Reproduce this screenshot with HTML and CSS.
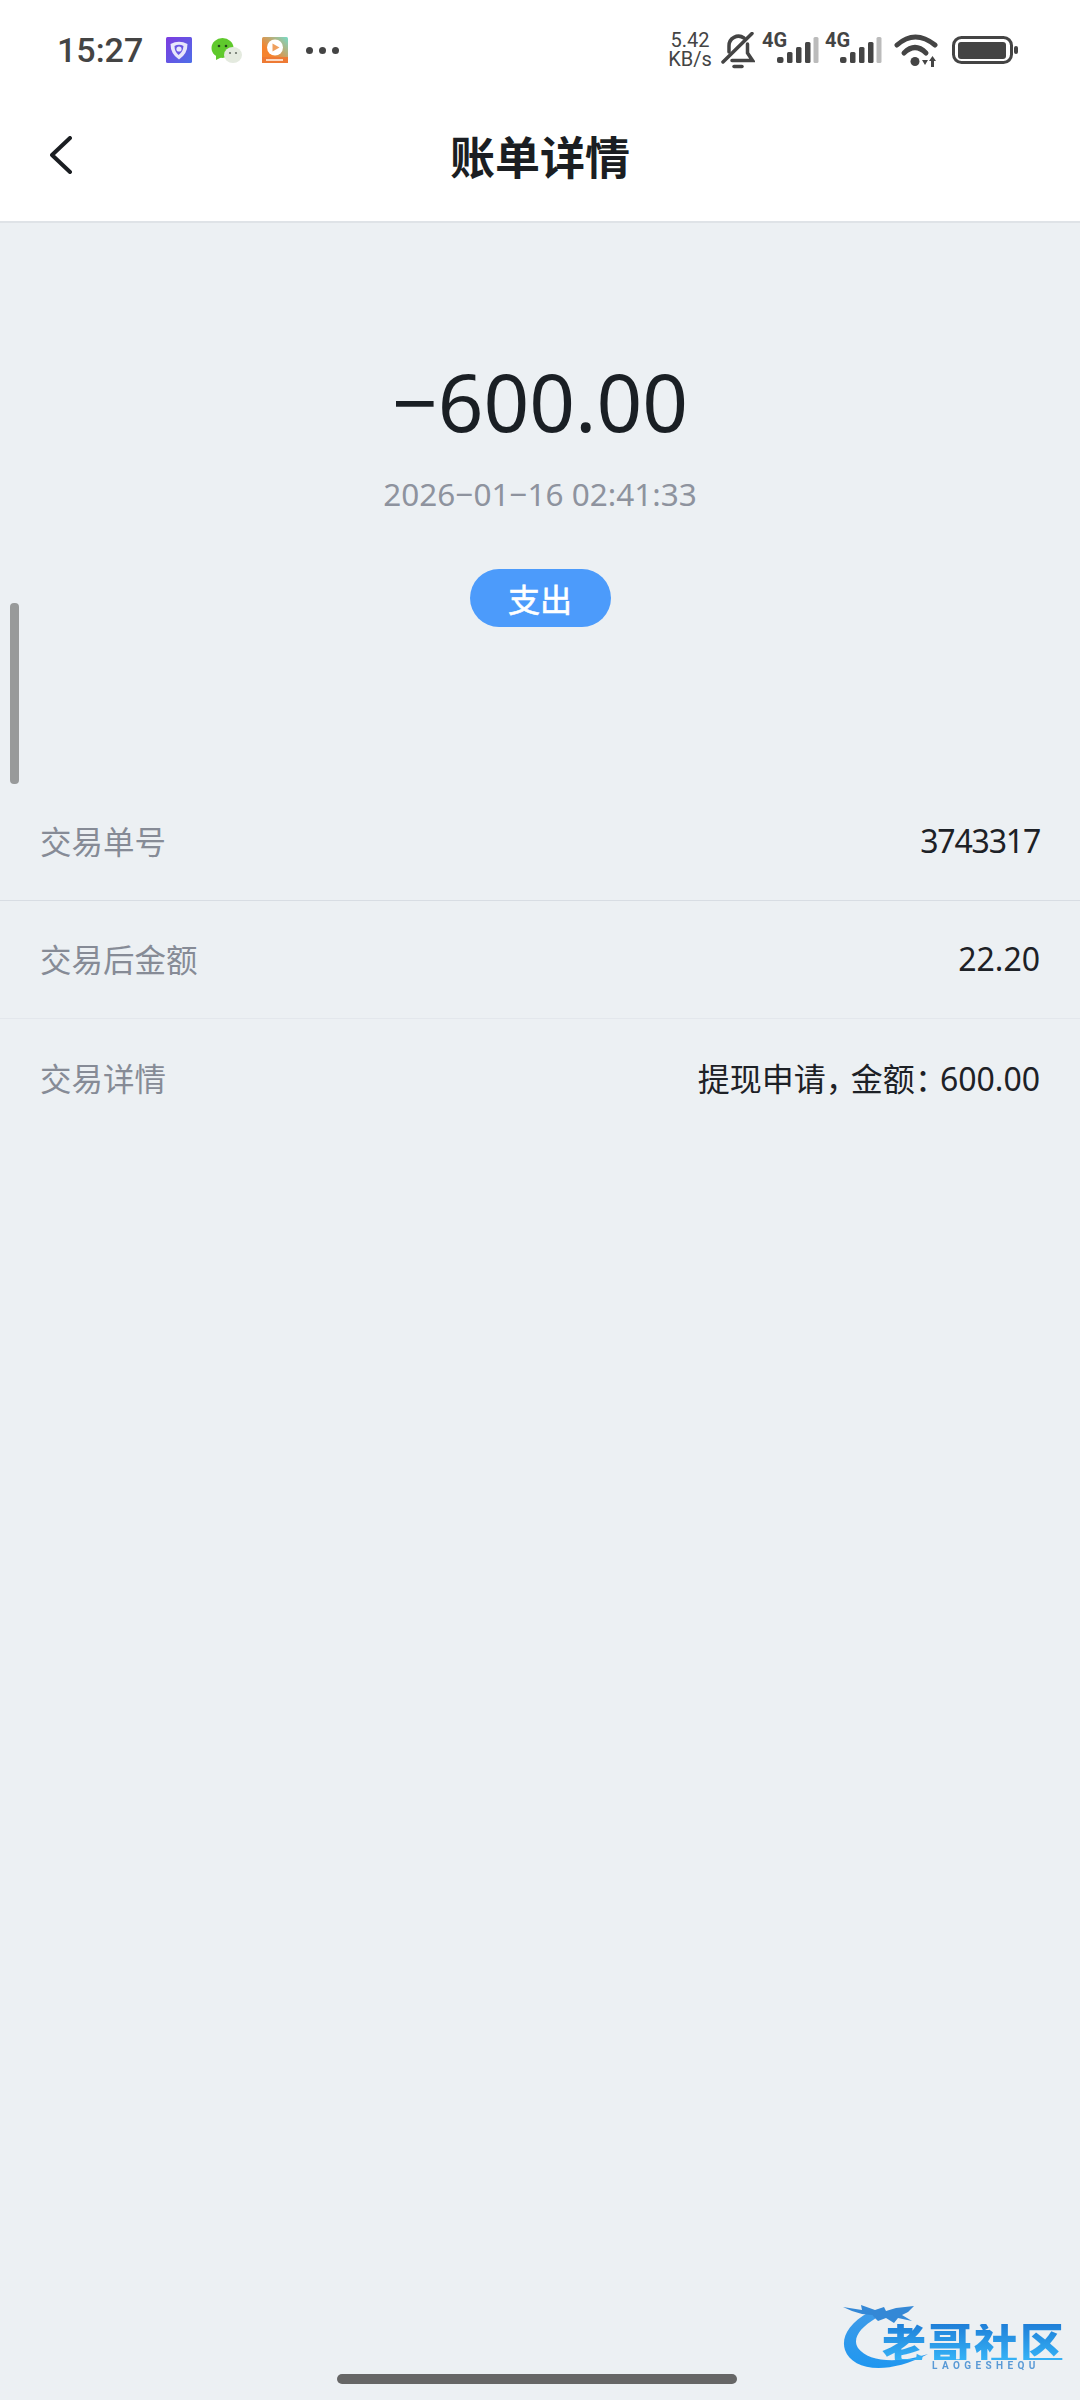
FILE: index.html
```html
<!DOCTYPE html>
<html lang="zh-CN">
<head>
    <meta charset="UTF-8">
    <meta name="viewport" content="width=device-width, initial-scale=1.0">
    <title>账单详情</title>
    <link rel="stylesheet" href="styles.css">
</head>
<body>

    <div class="phone">
        <div class="statusbar">
            <div class="status-left">
                <span class="time">15:27</span>
                <svg class="app-icon" width="26" height="26" viewBox="0 0 26 26">
                    <defs>
                        <linearGradient id="shieldBg" x1="0" y1="0" x2="1" y2="1">
                            <stop offset="0" stop-color="#7d3be0"/>
                            <stop offset="1" stop-color="#4d6fe8"/>
                        </linearGradient>
                    </defs>
                    <rect width="26" height="26" rx="1.5" fill="url(#shieldBg)"/>
                    <path d="M4.5 7 Q13 2.5 21.5 7 Q21.5 17 13 22.5 Q4.5 17 4.5 7Z" fill="#e8e6fb"/>
                    <path d="M8.5 9 Q13 6.5 17.5 9 Q17 15 12.5 18 Q8.5 14.5 8.5 9Z" fill="#6a55e4"/>
                    <circle cx="13" cy="12" r="2.6" fill="#e8e6fb"/>
                </svg>
                <svg class="app-icon app-wechat" width="32" height="28" viewBox="0 0 32 28">
                    <ellipse cx="11.5" cy="11" rx="11" ry="10" fill="#5fc92c"/>
                    <path d="M5 18 L5 23 L11 20Z" fill="#5fc92c"/>
                    <circle cx="8" cy="9" r="1.3" fill="#24461a"/>
                    <circle cx="15" cy="9" r="1.3" fill="#24461a"/>
                    <ellipse cx="22" cy="18" rx="9" ry="8" fill="#e4eadf"/>
                    <circle cx="19" cy="16" r="1.1" fill="#6a7168"/>
                    <circle cx="25" cy="16" r="1.1" fill="#6a7168"/>
                </svg>
                <svg class="app-icon" width="26" height="26" viewBox="0 0 26 26">
                    <defs>
                        <linearGradient id="playBg" x1="0" y1="1" x2="1" y2="0">
                            <stop offset="0.35" stop-color="#f5842f"/>
                            <stop offset="1" stop-color="#76dcc9"/>
                        </linearGradient>
                    </defs>
                    <rect width="26" height="26" rx="1.5" fill="url(#playBg)"/>
                    <rect y="20" width="26" height="6" fill="#ee7a34"/>
                    <rect x="4" y="22" width="17" height="2" fill="#fbd9c2"/>
                    <circle cx="13" cy="10.5" r="8" fill="#fff"/>
                    <path d="M10.5 6.5 L17.5 10.5 L10.5 14.5Z" fill="#efa05e"/>
                </svg>
                <div class="more-dots"><i></i><i></i><i></i></div>
            </div>
            <div class="status-right">
                <div class="net-speed">5.42<br>KB/s</div>
                <svg class="bell" width="34" height="37" viewBox="0 0 34 37" fill="none" stroke="#444" stroke-width="3.5" stroke-linecap="round">
                    <path d="M8 20 V14 a9.5 9.5 0 0 1 15 -8"/>
                    <path d="M26.5 12 V21 l5 7.5 H11"/>
                    <path d="M31 1.5 L2 30"/>
                    <path d="M13 34.5 h8"/>
                </svg>
                <svg class="signal" width="58" height="46" viewBox="0 -10 58 46">
                    <text x="1" y="14" class="signal-text">4G</text>
                    <rect x="16" y="24" width="6.5" height="6" rx="2" fill="#444"/>
                    <rect x="26" y="19" width="5.5" height="11" rx="1.5" fill="#444"/>
                    <rect x="35" y="14" width="5.5" height="16" rx="1.5" fill="#444"/>
                    <rect x="44" y="9" width="5.5" height="21" rx="1.5" fill="#444"/>
                    <rect x="52.5" y="4" width="5" height="26" rx="1.5" fill="#bbb"/>
                </svg>
                <svg class="signal" width="58" height="46" viewBox="0 -10 58 46">
                    <text x="1" y="14" class="signal-text">4G</text>
                    <rect x="16" y="24" width="6.5" height="6" rx="2" fill="#444"/>
                    <rect x="26" y="19" width="5.5" height="11" rx="1.5" fill="#444"/>
                    <rect x="35" y="14" width="5.5" height="16" rx="1.5" fill="#444"/>
                    <rect x="44" y="9" width="5.5" height="21" rx="1.5" fill="#444"/>
                    <rect x="52.5" y="4" width="5" height="26" rx="1.5" fill="#bbb"/>
                </svg>
                <svg class="wifi" width="44" height="33" viewBox="0 0 44 33" fill="none" stroke="#444" stroke-width="5" stroke-linecap="round">
                    <path d="M3 11 Q21 -5 41 11"/>
                    <path d="M10 19 Q21 8 32 19"/>
                    <circle cx="21" cy="27.5" r="4.5" fill="#444" stroke="none"/>
                    <path d="M28 26 H34 L31 31Z" fill="#444" stroke="none"/>
                    <path d="M37 33 V27 H35 L38.5 22 L42 27 H40 V33Z" fill="#444" stroke="none"/>
                </svg>
                <svg class="battery" width="66" height="28" viewBox="0 0 66 28">
                    <rect x="1.5" y="1.5" width="58" height="25" rx="8" fill="none" stroke="#444" stroke-width="3"/>
                    <rect x="6" y="6" width="48" height="17" rx="3" fill="#444"/>
                    <rect x="62" y="10" width="4" height="8" rx="2" fill="#444"/>
                </svg>
            </div>
        </div>

        <div class="navbar">
            <div class="nav-side">
                <svg width="22" height="38" viewBox="0 0 22 38" fill="none" stroke="#1b1e22" stroke-width="4" stroke-linecap="round" stroke-linejoin="round">
                    <path d="M20 2 L2 19 L20 36"/>
                </svg>
            </div>
            <h1>账单详情</h1>
            <div class="nav-side"></div>
        </div>

        <div class="content">
            <div class="summary">
                <div class="amount">−600.00</div>
                <div class="date">2026−01−16 02:41:33</div>
                <div class="tag">支出</div>
            </div>

            <div class="detail-list">
                <div class="detail-row">
                    <span class="detail-label">交易单号</span>
                    <span class="detail-value detail-value-tight">3743317</span>
                </div>
                <div class="detail-row detail-row-faint">
                    <span class="detail-label">交易后金额</span>
                    <span class="detail-value">22.20</span>
                </div>
                <div class="detail-row detail-row-last">
                    <span class="detail-label">交易详情</span>
                    <span class="detail-value">提现申请<span class="punct">，</span>金额<span class="punct">：</span>600.00</span>
                </div>
            </div>
        </div>

        <div class="scroll-thumb"></div>

        <div class="watermark">
            <svg width="100" height="72" viewBox="0 0 100 72">
                <defs>
                    <linearGradient id="dragonBlue" x1="0" y1="0" x2="0" y2="1">
                        <stop offset="0" stop-color="#3f9be8"/>
                        <stop offset="1" stop-color="#1f97f0"/>
                    </linearGradient>
                </defs>
                <path d="M27 8 C6 20 -1 34 3 46 C10 66 44 72 86 50 C56 60 26 58 16 44 C10 34 18 24 34 14Z" fill="url(#dragonBlue)"/>
                <path d="M1 3 L20 6 L19 1 L33 6 L42 3 L44 7 L54 4 L72 2 L66 8 L60 11 L70 17 L56 14 L52 19 L44 14 L36 17 L30 11 L20 10 L10 7Z" fill="#3488d6"/>
            </svg>
            <div class="wm-text">
                <div class="wm-name">老哥社区</div>
                <div class="wm-sub">LAOGESHEQU</div>
            </div>
        </div>

        <div class="home-bar"></div>
    </div>

</body>
</html>
```

FILE: styles.css
```css
* {
    box-sizing: border-box;
}

body {
    margin: 0;
    background-color: #ecf0f3;
    font-family: "Noto Sans", "Noto Sans CJK SC", sans-serif;
}

.phone {
    position: relative;
    width: 1080px;
    height: 2400px;
    overflow: hidden;
    background-color: #ecf0f3;
}

/* status bar */
.statusbar {
    display: flex;
    justify-content: space-between;
    align-items: center;
    height: 100px;
    padding: 0 62px 0 57px;
    background-color: #fff;
    color: #444;
}

.status-left {
    display: flex;
    align-items: center;
}

.time {
    width: 109px;
    font-family: Roboto, sans-serif;
    font-size: 34px;
    font-weight: 500;
}

.app-icon {
    display: block;
    margin-right: 19px;
}

.app-wechat {
    margin-top: 2px;
}

.more-dots {
    display: flex;
    gap: 6px;
    margin-left: -1px;
}

.more-dots i {
    display: block;
    width: 7px;
    height: 7px;
    border-radius: 50%;
    background-color: #444;
}

.status-right {
    display: flex;
    align-items: center;
}

.net-speed {
    width: 54px;
    margin-right: 4px;
    font-family: Roboto, sans-serif;
    font-size: 20px;
    line-height: 19px;
    text-align: center;
    color: #444;
}

.bell {
    display: block;
    margin-right: 6px;
}

.signal {
    display: block;
    margin-right: 5px;
    margin-top: -8px;
}

.signal-text {
    font-family: Roboto, sans-serif;
    font-size: 20px;
    font-weight: 700;
    fill: #444;
}

.wifi {
    display: block;
    margin-left: 7px;
    margin-right: 14px;
}

.battery {
    display: block;
}

/* nav */
.navbar {
    display: grid;
    grid-template-columns: 1fr auto 1fr;
    align-items: center;
    height: 123px;
    padding: 0 50px 11px;
    background-color: #fff;
    border-bottom: 2px solid #dfe3e7;
}

.nav-side svg {
    display: block;
}

.navbar h1 {
    margin: 0;
    font-family: "Noto Sans CJK SC", sans-serif;
    font-size: 45px;
    font-weight: 700;
    color: #1b1e22;
}

/* summary */
.summary {
    display: flex;
    flex-direction: column;
    align-items: center;
    padding-top: 132px;
}

.amount {
    height: 92px;
    font-size: 80px;
    line-height: 92px;
    color: #1a1f24;
}

.date {
    margin-top: 25px;
    font-size: 31.5px;
    line-height: 44px;
    color: #8e939e;
}

.tag {
    width: 141px;
    height: 58px;
    margin-top: 53px;
    border-radius: 29px;
    background-color: #4c9bfb;
    color: #fff;
    font-family: "Noto Sans CJK SC", sans-serif;
    font-size: 32px;
    line-height: 58px;
    text-align: center;
    -webkit-text-stroke: 0.6px #fff;
}

/* rows */
.detail-list {
    margin-top: 156px;
}

.detail-row {
    display: flex;
    justify-content: space-between;
    align-items: center;
    height: 118px;
    padding: 0 40px 3px;
    border-bottom: 1px solid #d8dde3;
    font-size: 32px;
}

.detail-row-faint {
    border-bottom-color: #e3e7ec;
}

.detail-row-last {
    border-bottom: none;
}

.detail-label {
    font-family: "Noto Sans CJK SC", sans-serif;
    font-size: 31.5px;
    color: #868b96;
}

.detail-value {
    color: #1d2126;
}

.detail-value-tight {
    letter-spacing: -1.2px;
}

.punct {
    letter-spacing: -7px;
}

/* overlays */
.scroll-thumb {
    position: absolute;
    left: 10px;
    top: 603px;
    width: 9px;
    height: 181px;
    border-radius: 4px;
    background-color: #989a9a;
}

.home-bar {
    position: absolute;
    left: 337px;
    top: 2374px;
    width: 400px;
    height: 10px;
    border-radius: 5px;
    background-color: #666;
}

.watermark {
    position: absolute;
    left: 842px;
    top: 2304px;
    display: flex;
    filter: blur(0.7px);
}

.wm-text {
    margin-left: -60px;
    padding-top: 20px;
}

.wm-name {
    width: 190px;
    font-family: "Noto Sans CJK SC", sans-serif;
    font-size: 44px;
    font-weight: 900;
    line-height: 36px;
    letter-spacing: 2px;
    white-space: nowrap;
    background: linear-gradient(#1f7fd8, #35b2f6);
    -webkit-background-clip: text;
    background-clip: text;
    color: transparent;
}

.wm-sub {
    margin: 1px 0 0 50px;
    font-family: Roboto, sans-serif;
    font-size: 10px;
    font-weight: 700;
    line-height: 10px;
    letter-spacing: 4.4px;
    color: #5a9ad6;
    white-space: nowrap;
}
```
